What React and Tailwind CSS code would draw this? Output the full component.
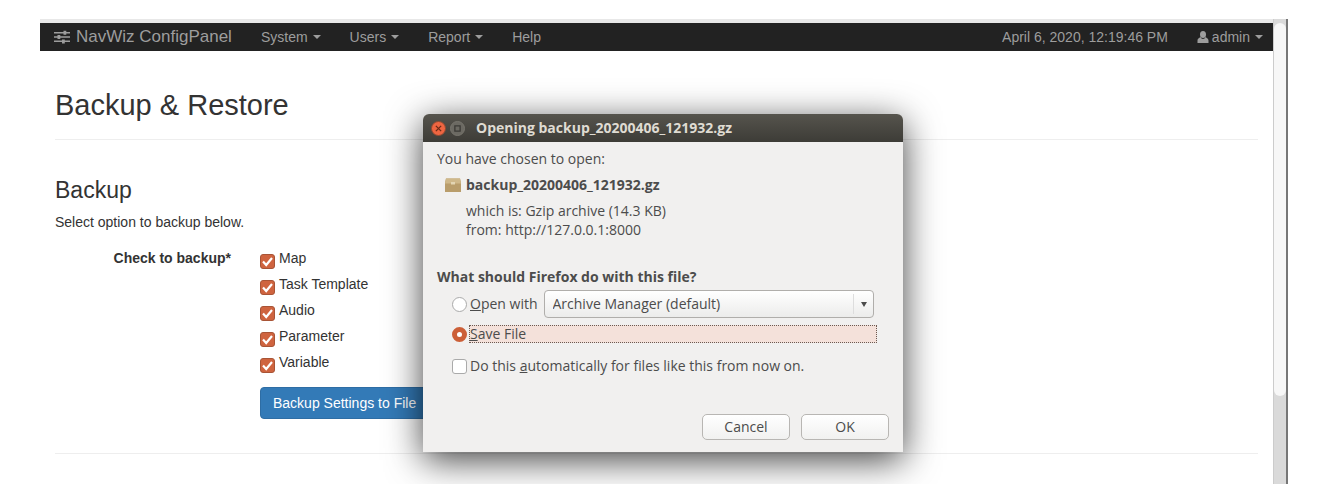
import React from 'react';

const menus = ['System', 'Users', 'Report'];
const options = ['Map', 'Task Template', 'Audio', 'Parameter', 'Variable'];

function Caret() {
  return <span className="inline-block border-x-4 border-t-4 border-x-transparent border-t-current" />;
}

function SlidersIcon() {
  return (
    <svg viewBox="0 0 16 14" className="w-4 h-3.5" fill="currentColor">
      <path d="M0 2h16v1.500H0zM0 6.300h16v1.500H0zM0 10.600h16v1.500H0z" />
      <path d="M9.500.8h2.800v4H9.500zM3.500 5.100h2.800v4H3.500zM8 9.400h2.800v4H8z" />
    </svg>
  );
}

function UserIcon() {
  return (
    <svg viewBox="0 0 12 12" className="w-3 h-3" fill="currentColor">
      <ellipse cx="6" cy="3.500" rx="3" ry="3.500" />
      <path d="M3.300 5.500C3.300 7 .5 7.200.5 9.500V12h11V9.500C11.500 7.200 8.700 7 8.700 5.500 8 7.400 7 7.900 6 7.900S4 7.400 3.300 5.500z" />
    </svg>
  );
}

function Navbar() {
  return (
    <nav className="flex h-7 items-center justify-between bg-[#222] pr-2.5 pl-3.5 text-sm text-[#9d9d9d]">
      <div className="flex items-center gap-[29px]">
        <a href="#" className="flex items-center gap-1.5 text-[17px]">
          <SlidersIcon />
          NavWiz ConfigPanel
        </a>
        {menus.map((name) => (
          <button key={name} className="flex items-center gap-[5px]">
            {name}
            <Caret />
          </button>
        ))}
        <a href="#">Help</a>
      </div>
      <div className="flex items-center gap-[29px]">
        <span>April 6, 2020, 12:19:46 PM</span>
        <button className="flex items-center gap-[3px]">
          <UserIcon />
          admin
          <span className="ml-0.5 flex"><Caret /></span>
        </button>
      </div>
    </nav>
  );
}

function BackupForm() {
  return (
    <main className="px-[15px] pt-9 pb-[30px] text-sm text-[#333]">
      <h1 className="text-[29px] leading-9">Backup &amp; Restore</h1>
      <hr className="mt-4 border-[#eee]" />
      <h2 className="mt-9 text-[23px] leading-7">Backup</h2>
      <p className="mt-2 leading-5">Select option to backup below.</p>
      <form className="mt-4 flex gap-[29px]" onSubmit={(e) => e.preventDefault()}>
        <span id="backup-label" className="w-44 text-right font-bold leading-5">Check to backup*</span>
        <div>
          <div role="group" aria-labelledby="backup-label">
            {options.map((name) => (
              <label key={name} className="flex h-[26px] items-start gap-1 leading-5">
                <span className="relative mt-1.5 h-[15px] w-[15px]">
                  <input
                    type="checkbox"
                    defaultChecked
                    className="block h-[15px] w-[15px] appearance-none rounded-[3px] border border-[#a85436] bg-[#cf643f]"
                  />
                  <svg viewBox="0 0 15 15" className="pointer-events-none absolute inset-0" fill="none" stroke="#fff" strokeWidth="2.200">
                    <path d="M3 7.500l3.200 3.500L12 4" />
                  </svg>
                </span>
                {name}
              </label>
            ))}
          </div>
          <button className="mt-[9px] h-8 rounded-[4px] border border-[#2e6da4] bg-[#337ab7] px-3 text-white">
            Backup Settings to File
          </button>
        </div>
      </form>
      <hr className="mt-[34px] border-[#eee]" />
    </main>
  );
}

function OpenDialog() {
  return (
    <div
      role="dialog"
      aria-labelledby="dialog-title"
      className="absolute left-[383px] top-[95px] w-[480px] rounded-t-md bg-[#f1f0ef] font-['Open_Sans','Noto_Sans',sans-serif] text-sm text-[#4c4c4c] shadow-[0_8px_36px_rgba(0,0,0,0.75)]"
    >
      <div className="flex h-7 items-center rounded-t-md bg-linear-to-b from-[#56544d] to-[#3d3c37] px-2 text-[#dfdbd2]">
        <button aria-label="Close" className="mr-1 h-[15px] w-[15px] rounded-full border border-[#8e4a32] bg-[#ee6541] p-[3px]">
          <svg viewBox="0 0 8 8" stroke="#6b2a17" strokeWidth="1.500"><path d="M1 1l6 6M7 1L1 7" /></svg>
        </button>
        <button aria-label="Maximize" className="h-[15px] w-[15px] rounded-full border border-[#77756d] bg-[#6b6962] p-[3px]">
          <svg viewBox="0 0 8 8" fill="none" stroke="#3b3a36" strokeWidth="1.500"><path d="M1 1h6v6H1z" /></svg>
        </button>
        <h2 id="dialog-title" className="ml-[11px] font-bold">Opening backup_20200406_121932.gz</h2>
      </div>

      <form className="px-3.5 pt-[7px] pb-3" onSubmit={(e) => e.preventDefault()}>
        <p className="leading-5">You have chosen to open:</p>
        <div className="mt-1.5 ml-2 flex items-center gap-[5px] leading-5">
          <svg viewBox="0 0 16 14" className="h-3.5 w-4">
            <path d="M1 .5h14l1 4V14H0V4.500z" fill="#b99d6b" />
            <path d="M1 .5h14l1 5H0z" fill="#cfb88a" />
            <path d="M6 4h4v2.500H6z" fill="#e3d5b3" />
          </svg>
          <b>backup_20200406_121932.gz</b>
        </div>
        <div className="mt-1.5 ml-[29px] leading-[19px]">
          <p>which is: Gzip archive (14.3 KB)</p>
          <p>from: http://127.0.0.1:8000</p>
        </div>

        <p className="mt-7 font-bold leading-5">What should Firefox do with this file?</p>
        <div className="mt-[3px] ml-[15px] flex items-center">
          <label className="flex items-center gap-[3px]">
            <input type="radio" name="action" className="h-[15px] w-[15px] appearance-none rounded-full border border-[#aaa] bg-white" />
            <span><u>O</u>pen with</span>
          </label>
          <span className="relative ml-1.5 mr-[15px] flex-1">
            <select
              aria-label="Application"
              className="block h-7 w-full appearance-none rounded-[4px] border border-[#b0aeab] bg-linear-to-b from-white to-[#ececeb] px-2"
            >
              <option>Archive Manager (default)</option>
            </select>
            <span className="pointer-events-none absolute inset-y-1 right-0 flex w-[21px] items-center justify-center border-l border-[#ddd]">
              <span className="border-x-3 border-t-5 border-x-transparent border-t-current" />
            </span>
          </span>
        </div>
        <label className="mt-[7px] ml-[15px] mr-3 flex items-center gap-0.5">
          <input
            type="radio"
            name="action"
            defaultChecked
            className="h-[15px] w-[15px] appearance-none rounded-full border-5 border-[#cc5f38] bg-white"
          />
          <span className="flex-1 border border-dotted border-[#6b5a52] bg-[#f4e1da] leading-4"><u>S</u>ave File</span>
        </label>
        <label className="mt-[13px] ml-[15px] flex items-center gap-[3px] leading-5">
          <input type="checkbox" className="h-[15px] w-[15px] appearance-none rounded-[3px] border border-[#aaa] bg-white" />
          <span>Do this <u>a</u>utomatically for files like this from now on.</span>
        </label>
        <div className="mt-[38px] flex justify-end gap-[11px]">
          <button className="h-[26px] w-[88px] rounded-[5px] border border-[#b8b6b3] bg-linear-to-b from-white to-[#f1f1f0]">Cancel</button>
          <button className="h-[26px] w-[88px] rounded-[5px] border border-[#b8b6b3] bg-linear-to-b from-white to-[#f1f1f0]">OK</button>
        </div>
      </form>
    </div>
  );
}

export default function App() {
  return (
    <div className="bg-white pt-[19px] pr-[34px] pb-2.5 pl-10 font-['Liberation_Sans',Arial,sans-serif]">
      <div className="relative flex overflow-hidden border-r-2 border-[#777]">
        <div className="flex-1 border-t-4 border-[#e8e8e8]">
          <Navbar />
          <BackupForm />
        </div>
        {/* Scrollbar */}
        <div className="w-[13px] border-l border-[#ccc] bg-[#dadada] pt-1">
          <div className="h-[81%] rounded-full bg-[#f7f7f7]" />
        </div>
        <OpenDialog />
      </div>
    </div>
  );
}
